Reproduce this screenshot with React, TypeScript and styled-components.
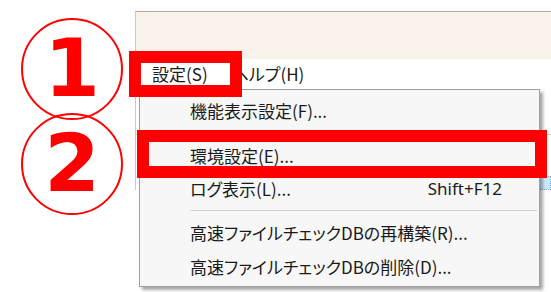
import React from "react";
import styled, { createGlobalStyle } from "styled-components";

const Global = createGlobalStyle`
  html, body { margin: 0; padding: 0; background: #ffffff; }
  body { width: 551px; height: 292px; overflow: hidden; }
`;

const Page = styled.div`
  position: relative;
  width: 551px;
  height: 292px;
  background: #ffffff;
  padding-top: 11px;
  box-sizing: border-box;
  font-family: "Noto Sans CJK JP", "Noto Sans", sans-serif;
`;

const Window = styled.div`
  margin-left: 135px;
  border-top: 1px solid #a9a9a9;
  border-left: 1px solid #c8c8c8;
  display: flex;
  flex-direction: column;
`;

const Toolbar = styled.div`
  height: 47px;
  background: #f9f2e9;
`;

const MenuBar = styled.div`
  height: 29px;
  background: #ffffff;
  display: flex;
  align-items: center;
  padding-left: 16px;
  gap: 24px;
  font-size: 17px;
  color: #1a1a1a;
  font-feature-settings: "palt";
`;

const MenuTitle = styled.span`
  line-height: 29px;
`;

const Body = styled.div`
  display: flex;
  flex-direction: column;
`;

const ListHeader = styled.div`
  height: 46px;
  border-bottom: 1px solid #cfcfcf;
`;

const Spacer = styled.div<{ $h: number }>`
  height: ${(p) => p.$h}px;
`;

const SelectedRow = styled.div`
  height: 12px;
  margin-left: 8px;
  background: #cce8ff;
  border: 1px dotted #7aa7d6;
`;

const Popup = styled.div`
  position: absolute;
  left: 139px;
  top: 89px;
  width: 401px;
  height: 198px;
  box-sizing: border-box;
  background: #f7f7f7;
  border: 1px solid #a0a0a0;
  box-shadow: 3px 3px 3px rgba(0, 0, 0, 0.35);
  padding: 3px 0;
  display: flex;
  flex-direction: column;
  font-size: 17px;
  color: #1a1a1a;
  font-feature-settings: "palt";
`;

const Item = styled.div<{ $h: number; $mt?: number }>`
  height: ${(p) => p.$h}px;
  margin-top: ${(p) => p.$mt ?? 0}px;
  flex: none;
  display: flex;
  align-items: center;
  justify-content: space-between;
  padding: 0 37px 0 50px;
  white-space: nowrap;
`;

const Shortcut = styled.span`
  font-family: "Noto Sans", sans-serif;
`;

const Separator = styled.div`
  height: 10px;
  flex: none;
  display: flex;
  align-items: center;
  padding: 0 2px 0 50px;
  &::after {
    content: "";
    flex: 1;
    height: 1px;
    background: #d2d2d2;
  }
`;

const RedBox = styled.div<{ $l: number; $t: number; $w: number; $h: number }>`
  position: absolute;
  left: ${(p) => p.$l}px;
  top: ${(p) => p.$t}px;
  width: ${(p) => p.$w}px;
  height: ${(p) => p.$h}px;
  box-sizing: border-box;
  border: 12px solid #ff0000;
`;

const Circle = styled.div<{ $t: number }>`
  position: absolute;
  left: 21px;
  top: ${(p) => p.$t}px;
  width: 102px;
  height: 102px;
  box-sizing: border-box;
  border: 2px solid #ff0000;
  border-radius: 50%;
  display: flex;
  align-items: center;
  justify-content: center;
  color: #ff0000;
  font-family: "DejaVu Sans", sans-serif;
  font-weight: 700;
  font-size: 80px;
  line-height: 1;
`;

export default function App() {
  return (
    <>
      <Global />
      <Page>
        <Window>
          <Toolbar />
          <MenuBar>
            <MenuTitle>設定(S)</MenuTitle>
            <MenuTitle>ヘルプ(H)</MenuTitle>
          </MenuBar>
          <Body>
            <ListHeader />
            <Spacer $h={41} />
            <SelectedRow />
          </Body>
        </Window>

        <Popup>
          <Item $h={34}>機能表示設定(F)...</Item>
          <Item $h={32} $mt={12}>環境設定(E)...</Item>
          <Item $h={34}>
            <span>ログ表示(L)...</span>
            <Shortcut>Shift+F12</Shortcut>
          </Item>
          <Separator />
          <Item $h={34}>高速ファイルチェックDBの再構築(R)...</Item>
          <Item $h={34}>高速ファイルチェックDBの削除(D)...</Item>
        </Popup>

        <Circle $t={18}>1</Circle>
        <Circle $t={113}>2</Circle>
        <RedBox $l={129} $t={51} $w={113} $h={46} />
        <RedBox $l={137} $t={130} $w={410} $h={48} />
      </Page>
    </>
  );
}
